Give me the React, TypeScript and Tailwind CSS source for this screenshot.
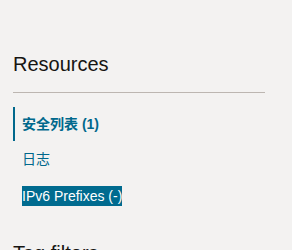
export default function App() {
  return (
    <div
      className="h-[250px] w-[292px] overflow-hidden bg-[#f3f2f1] pl-[13px] pt-[52px] text-[#161513]"
      style={{ fontFamily: '"Liberation Sans", "Noto Sans CJK SC", sans-serif' }}
    >
      <div className="w-[252px]">
        <h2 className="border-b border-[#bcb6b1] pb-[16px] text-[20px] leading-[24px]">
          Resources
        </h2>
        <ul className="mt-[14px] text-[14px] text-[#00688c]">
          <li className="flex h-[34px] items-center border-l-2 border-[#00688c] pl-[7px] font-bold">
            安全列表 (1)
          </li>
          <li className="flex h-[36px] items-center pl-[9px]">日志</li>
          <li className="flex h-[38px] items-center pl-[9px]">
            <span className="bg-[#006b8f] leading-[20px] text-white">
              IPv6 Prefixes (-)
            </span>
          </li>
        </ul>
        <h3 className="mt-[26px] text-[20px] leading-[24px]">Tag filters</h3>
      </div>
    </div>
  );
}
